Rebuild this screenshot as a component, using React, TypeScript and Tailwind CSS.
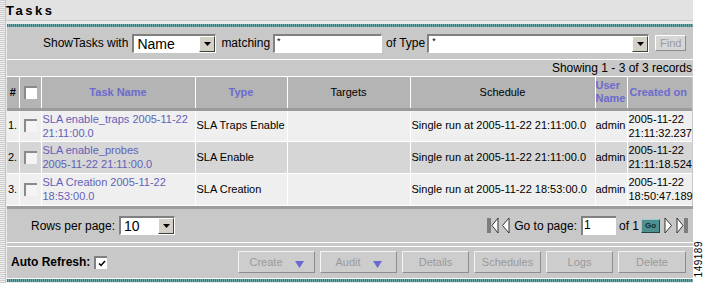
import React from "react";

const Arrow = ({ className = "" }: { className?: string }) => (
  <svg width="7" height="4" viewBox="0 0 7 4" className={className}>
    <path d="M0 0H7L3.5 4Z" fill="#000" />
  </svg>
);

const Select = ({ value, w }: { value: string; w: string }) => (
  <div className={`${w} h-[19px] shrink-0 bg-white flex items-stretch border-t-2 border-l-2 border-t-[#808080] border-l-[#808080] border-b border-r border-b-white border-r-white`}>
    <div className="flex-1 pl-[3px] text-[14px] leading-[16px] text-black">{value}</div>
    <div className="w-[16px] bg-[#d4d0c8] flex items-center justify-center border-t border-l border-t-white border-l-white border-b border-r border-b-[#404040] border-r-[#404040]">
      <Arrow />
    </div>
  </div>
);

const Btn = ({ label, w, arrow }: { label: string; w: string; arrow?: boolean }) => (
  <div className={`${w} h-[22px] shrink-0 bg-[#cdcdcd] border border-t-[#f4f4f4] border-l-[#f4f4f4] border-b-[#8c8c8c] border-r-[#8c8c8c] flex items-center justify-center text-[11px] text-[#9a9a9a] gap-[12px]`}>
    <span>{label}</span>
    {arrow && (
      <svg width="9" height="7" viewBox="0 0 9 7" className="mt-[5px]">
        <path d="M0 0H9L4.5 7Z" fill="#6a6ad0" />
      </svg>
    )}
  </div>
);

const RowCheck = () => (
  <div className="w-[13px] h-[13px] bg-[#f4f4f4] border-t-2 border-l-2 border-t-[#8a8a8a] border-l-[#8a8a8a] mx-auto" />
);

const rows = [
  {
    n: "1.",
    name: ["SLA enable_traps 2005-11-22", "21:11:00.0"],
    type: "SLA Traps Enable",
    sched: "Single run at 2005-11-22 21:11:00.0",
    created: ["2005-11-22", "21:11:32.237"],
    bg: "bg-[#efefef]",
  },
  {
    n: "2.",
    name: ["SLA enable_probes", "2005-11-22 21:11:00.0"],
    type: "SLA Enable",
    sched: "Single run at 2005-11-22 21:11:00.0",
    created: ["2005-11-22", "21:11:18.524"],
    bg: "bg-[#d6d6d6]",
  },
  {
    n: "3.",
    name: ["SLA Creation 2005-11-22", "18:53:00.0"],
    type: "SLA Creation",
    sched: "Single run at 2005-11-22 18:53:00.0",
    created: ["2005-11-22", "18:50:47.189"],
    bg: "bg-[#efefef]",
  },
];

const Teal = () => (
  <div className="h-[3px] shrink-0 bg-[repeating-linear-gradient(90deg,#2f7f7f_0px,#2f7f7f_1px,#6fa8a8_1px,#6fa8a8_2px)]" />
);

export default function App() {
  return (
    <div className="w-[705px] h-[283px] bg-white flex font-['Liberation_Sans',Arial,sans-serif] text-[11px] text-black overflow-hidden">
      <div className="w-[6px] h-full bg-[repeating-linear-gradient(0deg,#cccccc_0px,#cccccc_1px,#f0f0f0_1px,#f0f0f0_2px)] border-r border-[#c4c4c4]" />
      <div className="w-[687px] flex flex-col bg-[#ebebeb]">
        <div className="h-[21px] shrink-0 bg-[#e2e2e2] border-b border-[#c9c9c9] flex items-center">
          <span className="font-bold text-[13px] tracking-[2.5px] leading-none">Tasks</span>
        </div>
        <div className="pl-[1px] pt-[3px] flex flex-col">
          <Teal />
          <div className="bg-[#c8c8c8] flex flex-col">
            {/* filter row */}
            <div className="h-[33px] flex items-center pl-[36px] border-b border-white">
              <span className="text-[12px] mr-[4px] whitespace-nowrap">ShowTasks with</span>
              <Select value="Name" w="w-[84px]" />
              <span className="text-[12px] ml-[5px] mr-[3px]">matching</span>
              <div className="w-[109px] h-[19px] shrink-0 bg-white border-t-2 border-l-2 border-t-[#808080] border-l-[#808080] border-b border-r border-b-white border-r-white text-[9px] leading-[10px] pl-[2px]">*</div>
              <span className="text-[12px] ml-[4px] mr-[2px] whitespace-nowrap">of Type</span>
              <div className="w-[222px] h-[19px] shrink-0 bg-white flex items-stretch border-t-2 border-l-2 border-t-[#808080] border-l-[#808080] border-b border-r border-b-white border-r-white">
                <div className="flex-1 pl-[3px] text-[9px] leading-[10px]">*</div>
                <div className="w-[16px] bg-[#d4d0c8] flex items-center justify-center border-t border-l border-t-white border-l-white border-b border-r border-b-[#404040] border-r-[#404040]">
                  <Arrow />
                </div>
              </div>
              <div className="ml-[6px] w-[31px] h-[16px] shrink-0 bg-[#d6d6d6] border border-t-white border-l-white border-b-[#8c8c8c] border-r-[#8c8c8c] flex items-center justify-center text-[11px] text-[#9a9a9a]">
                Find
              </div>
            </div>
            {/* showing row */}
            <div className="h-[17px] flex items-center justify-end pr-[1px] border-b border-white text-[12px]">
              Showing 1 - 3 of 3 records
            </div>
            {/* table */}
            <table className="table-fixed border-collapse w-[685px]">
              <colgroup>
                <col className="w-[12px]" />
                <col className="w-[22px]" />
                <col className="w-[154px]" />
                <col className="w-[92px]" />
                <col className="w-[123px]" />
                <col className="w-[185px]" />
                <col className="w-[32px]" />
                <col className="w-[65px]" />
              </colgroup>
              <thead>
                <tr className="h-[32px] bg-[#b4b4b4] border-b-[3px] border-[#9c9c9c]">
                  <th className="font-bold text-[11px] text-center">#</th>
                  <th className="border-l border-white">
                    <div className="w-[13px] h-[13px] bg-white border-t-2 border-l-2 border-t-[#8a8a8a] border-l-[#8a8a8a] mx-auto" />
                  </th>
                  <th className="border-l border-white font-bold text-[11px] text-[#6b6bcf]">Task Name</th>
                  <th className="border-l border-white font-bold text-[11px] text-[#6b6bcf]">Type</th>
                  <th className="border-l border-white font-normal text-[11px]">Targets</th>
                  <th className="border-l border-white font-normal text-[11px]">Schedule</th>
                  <th className="border-l border-white font-bold text-[11px] leading-[13px] text-[#6b6bcf] text-left">
                    User
                    <br />
                    Name
                  </th>
                  <th className="border-l border-white font-bold text-[11px] text-[#6b6bcf] text-left pl-[2px] whitespace-nowrap">Created on</th>
                </tr>
              </thead>
              <tbody>
                {rows.map((r) => (
                  <tr key={r.n} className={`h-[32px] ${r.bg} border-b border-white`}>
                    <td className="text-[11px] pl-[1px]">{r.n}</td>
                    <td className="border-l border-white">
                      <RowCheck />
                    </td>
                    <td className="border-l border-white text-[11px] leading-[14px] text-[#6262b8] pl-[1px] whitespace-nowrap">
                      {r.name[0]}
                      <br />
                      {r.name[1]}
                    </td>
                    <td className="border-l border-white text-[11px] pl-[1px] whitespace-nowrap">{r.type}</td>
                    <td className="border-l border-white"></td>
                    <td className="border-l border-white text-[11px] pl-[1px] whitespace-nowrap">{r.sched}</td>
                    <td className="border-l border-white text-[11px] whitespace-nowrap">admin</td>
                    <td className="border-l border-white text-[11px] leading-[14px] pl-[1px] whitespace-nowrap">
                      {r.created[0]}
                      <br />
                      {r.created[1]}
                    </td>
                  </tr>
                ))}
              </tbody>
            </table>
            <div className="h-[4px] bg-[#c8c8c8] border-t-[3px] border-[#9c9c9c]" />
            {/* pager */}
            <div className="h-[32px] flex items-center pl-[24px] pr-[5px]">
              <span className="text-[12px] mr-[4px] whitespace-nowrap">Rows per page:</span>
              <Select value="10" w="w-[56px]" />
              <div className="flex-1" />
              <svg width="12" height="17" viewBox="0 0 12 17" className="mr-[2px] shrink-0">
                <path d="M1 1V16M3 1V16" stroke="#333" strokeWidth="1" fill="none" />
                <path d="M11 1L5 8.5L11 16Z" stroke="#333" strokeWidth="1" fill="#fff" />
              </svg>
              <svg width="9" height="17" viewBox="0 0 9 17" className="mr-[4px] shrink-0">
                <path d="M8 1L1.5 8.5L8 16Z" stroke="#333" strokeWidth="1" fill="#fff" />
              </svg>
              <span className="text-[12px] mr-[4px] whitespace-nowrap">Go to page:</span>
              <div className="w-[35px] h-[19px] shrink-0 bg-white border-t-2 border-l-2 border-t-[#808080] border-l-[#808080] text-[12px] leading-[14px] pl-[1px]">1</div>
              <span className="text-[12px] ml-[3px] mr-[2px] whitespace-nowrap">of 1</span>
              <div className="w-[19px] h-[14px] shrink-0 bg-[#4e8f8f] border border-t-[#9cc] border-l-[#9cc] border-b-[#244] border-r-[#244] flex items-center justify-center text-[8px] font-bold text-[#103030] mr-[4px]">
                Go
              </div>
              <svg width="9" height="17" viewBox="0 0 9 17" className="mr-[3px] shrink-0">
                <path d="M1 1L7.5 8.5L1 16Z" stroke="#333" strokeWidth="1" fill="#fff" />
              </svg>
              <svg width="12" height="17" viewBox="0 0 12 17" className="shrink-0">
                <path d="M1 1L7 8.5L1 16Z" stroke="#333" strokeWidth="1" fill="#fff" />
                <path d="M9 1V16M11 1V16" stroke="#333" strokeWidth="1" fill="none" />
              </svg>
            </div>
            <div className="h-[5px] border-t border-b border-white bg-[#c8c8c8]" />
            {/* auto refresh */}
            <div className="h-[32px] flex items-center pl-[4px] border-b border-white">
              <span className="font-bold text-[12px] mr-[4px] whitespace-nowrap shrink-0">Auto Refresh:</span>
              <div className="w-[13px] h-[13px] shrink-0 bg-white border-t-2 border-l-2 border-t-[#808080] border-l-[#808080] flex items-center justify-center">
                <svg width="8" height="7" viewBox="0 0 8 7">
                  <path d="M1 3.5L3 5.5L7 1" stroke="#000" strokeWidth="1.5" fill="none" />
                </svg>
              </div>
              <div className="flex-1" />
              <div className="flex gap-[5px] pr-[7px]">
                <Btn label="Create" w="w-[77px]" arrow />
                <Btn label="Audit" w="w-[77px]" arrow />
                <Btn label="Details" w="w-[67px]" />
                <Btn label="Schedules" w="w-[67px]" />
                <Btn label="Logs" w="w-[67px]" />
                <Btn label="Delete" w="w-[68px]" />
              </div>
            </div>
          </div>
          <Teal />
        </div>
      </div>
      <div className="w-[12px] flex flex-col justify-end pb-[6px] pl-[1px]">
        <span className="[writing-mode:vertical-rl] rotate-180 text-[10px] leading-[10px] tracking-[0.5px]">149189</span>
      </div>
    </div>
  );
}
